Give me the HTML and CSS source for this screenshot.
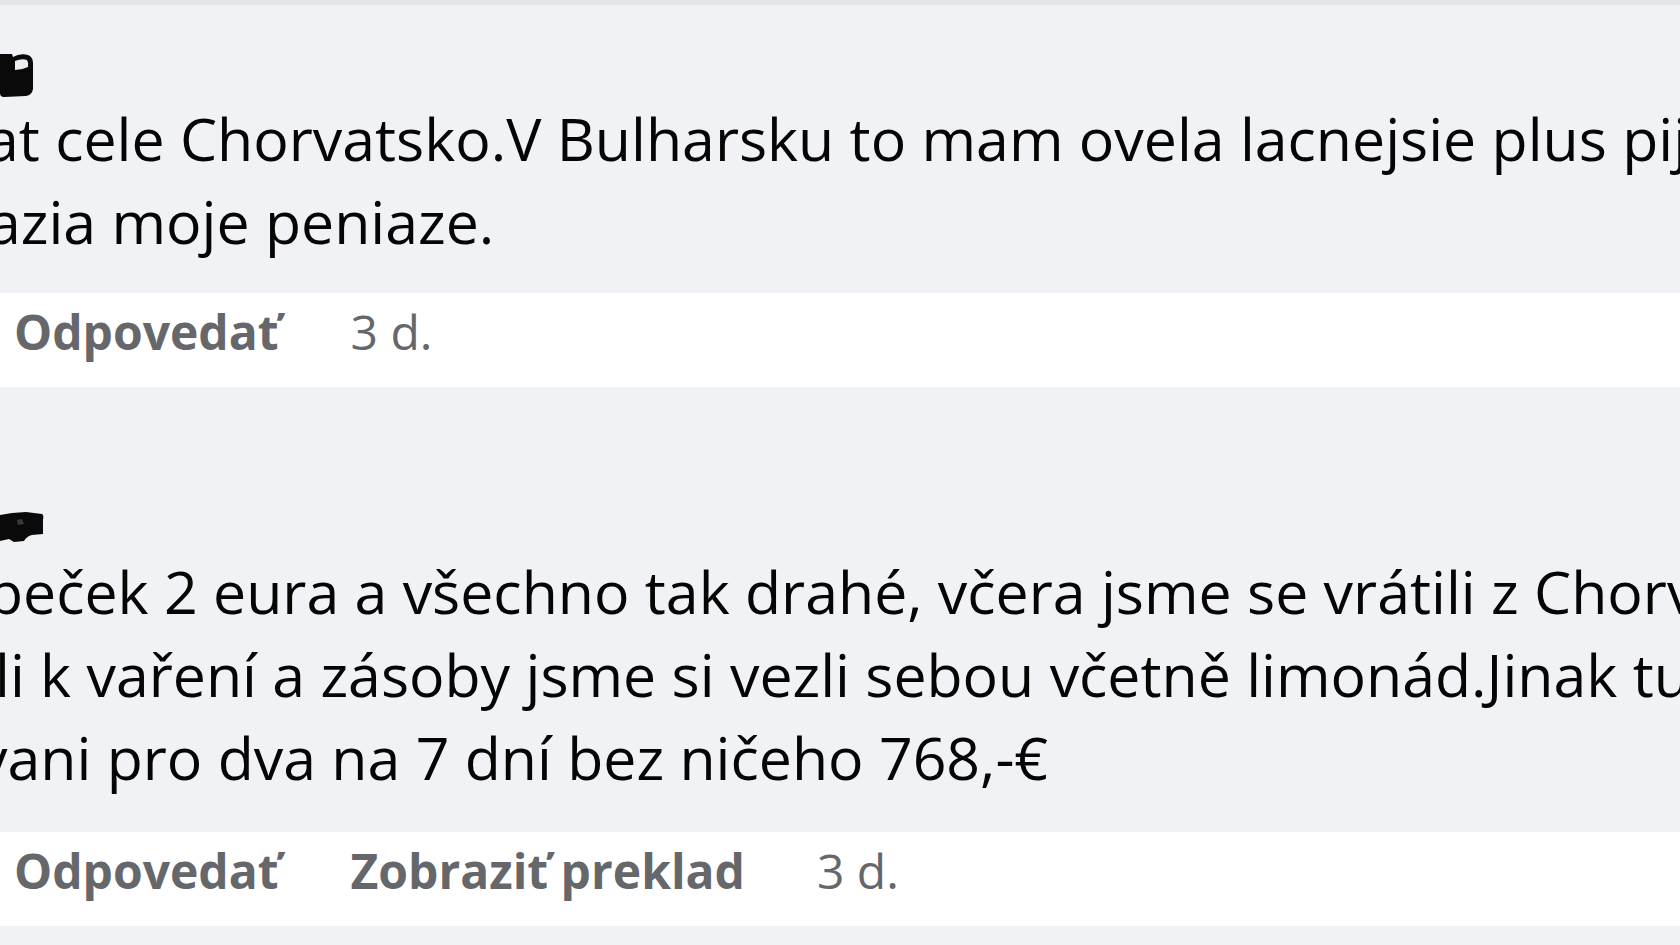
FILE: index.html
```html
<!DOCTYPE html>
<html lang="sk">
<head>
<meta charset="utf-8">
<title>Komentáre</title>
<link rel="stylesheet" href="styles.css">
</head>
<body>
<div class="page">
  <div class="topband"></div>

  <section class="bubble bubble-one">
    <div class="author author-one">
      <svg class="redact" width="34" height="45" viewBox="0 0 34 45" aria-hidden="true">
        <path d="M0 1 L12 1 L13 4 Q20 0 28 2 Q33 4 33 10 L33 36 Q32 42 26 43 L4 44 Q0 44 0 40 Z" fill="#0a0a0a"/>
        <path d="M15 8 Q22 5 27 7 Q29 10 28 14 Q22 17 15 17 Z" fill="#eceef1"/>
      </svg>
    </div>
    <p class="text">
      <span class="line l1a">at cele Chorvatsko.V Bulharsku to mam ovela lacnejsie plus pij</span>
      <span class="line l1b">azia moje peniaze.</span>
    </p>
  </section>

  <div class="actions">
    <span class="act">Odpovedať</span>
    <span class="time">3 d.</span>
  </div>

  <section class="bubble bubble-two">
    <div class="author author-two">
      <svg class="redact" width="44" height="32" viewBox="0 0 44 32" aria-hidden="true">
        <path d="M0 3 L12 1 L26 0 L42 2 Q44 3 43 8 L43 22 L32 23 Q27 24 24 29 L14 30 L9 27 L0 29 Z" fill="#0a0a0a"/>
        <path d="M17 8 L22 7 L24 12 L18 13 Z" fill="#3a3a3a"/>
      </svg>
    </div>
    <p class="text">
      <span class="line l2a">peček 2 eura a všechno tak drahé, včera jsme se vrátili z Chorvatska</span>
      <span class="line l2b">li k vaření a zásoby jsme si vezli sebou včetně limonád.Jinak tu</span>
      <span class="line l2c">vani pro dva na 7 dní bez ničeho 768,-€</span>
    </p>
  </section>

  <div class="actions">
    <span class="act">Odpovedať</span>
    <span class="act">Zobraziť preklad</span>
    <span class="time">3 d.</span>
  </div>

  <div class="bottomband"></div>
</div>
</body>
</html>
```

FILE: styles.css
```css
html, body {
  margin: 0;
  padding: 0;
  background: #f0f2f5;
}

body {
  width: 1680px;
  height: 945px;
  overflow: hidden;
  font-family: "Open Sans", "Noto Sans", "Liberation Sans", sans-serif;
  color: #050505;
}

.page {
  display: flex;
  flex-direction: column;
  width: 1680px;
  height: 945px;
  overflow: hidden;
}

.topband {
  height: 5px;
  background: #e4e6ea;
  flex: none;
}

.bubble {
  background: #f0f2f5;
  flex: none;
  overflow: hidden;
}

.bubble-one {
  height: 288px;
  padding-top: 48px;
  box-sizing: border-box;
}

.bubble-two {
  height: 445px;
  padding-top: 125px;
  box-sizing: border-box;
}

.author {
  display: flex;
  align-items: flex-start;
}

.author-one {
  height: 44px;
}

.author-two {
  height: 38px;
}

.redact {
  display: block;
}

.text {
  margin: 0;
  font-size: 59px;
  line-height: 83px;
  white-space: nowrap;
}

.line {
  display: block;
}

.l1a { margin-left: -14px; }
.l1b { margin-left: -12px; }
.l2a { margin-left: -13px; }
.l2b { margin-left: -5px; }
.l2c { margin-left: -22px; }

.actions {
  flex: none;
  height: 94px;
  box-sizing: border-box;
  background: #ffffff;
  padding: 5px 0 0 14px;
  display: flex;
  align-items: baseline;
  gap: 72px;
  font-size: 48px;
  line-height: 68px;
  color: #65676b;
}

.act {
  font-weight: 700;
}

.time {
  font-weight: 400;
}

.bottomband {
  flex: 1;
  background: #f0f2f5;
}
```
